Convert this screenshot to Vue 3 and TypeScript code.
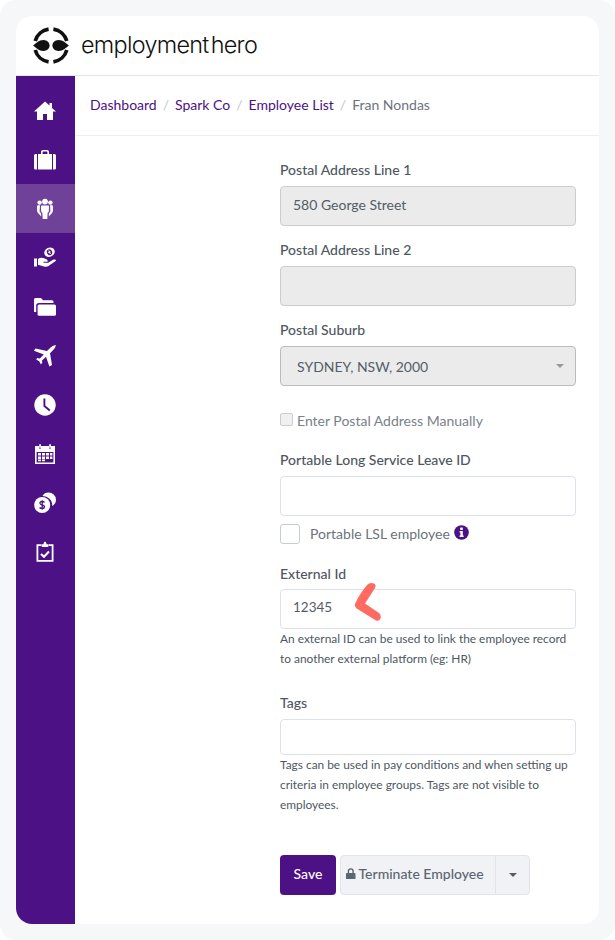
<script setup lang="ts">
const crumbs: string[] = ['Dashboard', 'Spark Co', 'Employee List']
const navItems = ['home', 'case', 'people', 'money', 'folder', 'plane', 'clock', 'cal', 'coins', 'clip']
</script>

<template>
  <div class="frame">
    <div class="card">
      <header class="top">
        <svg class="logo" width="36" height="37" viewBox="0 0 36 37">
          <g fill="none" stroke="#111" stroke-width="3.7">
            <path d="M15.6 2.2 A16.3 16.3 0 0 0 2.2 14" />
            <path d="M20.4 2.2 A16.3 16.3 0 0 1 33.8 14" />
            <path d="M15.6 34.8 A16.3 16.3 0 0 1 2.2 23" />
            <path d="M20.4 34.8 A16.3 16.3 0 0 0 33.8 23" />
          </g>
          <path d="M0 18.5 C3 16.5 5.5 13 10.5 13 C14.2 13 16.6 15.8 16.6 18.5 C16.6 21.2 14.2 24 10.5 24 C5.5 24 3 20.5 0 18.5 Z" fill="#111" />
          <path d="M36 18.5 C33 16.5 30.5 13 25.5 13 C21.8 13 19.4 15.8 19.4 18.5 C19.4 21.2 21.8 24 25.5 24 C30.5 24 33 20.5 36 18.5 Z" fill="#111" />
        </svg>
        <span class="brand">employment<span class="brand-gap">hero</span></span>
      </header>
      <div class="body">
        <nav class="side">
          <div v-for="n in navItems" :key="n" class="nav" :class="{ active: n === 'people' }">
            <svg width="22" height="22" viewBox="0 0 22 22" fill="#fff">
              <template v-if="n === 'home'">
                <path d="M11 1.5 L15.5 5.6 L15.5 3 L18 3 L18 8 L22 11.6 L19 11.6 L19 20 L13 20 L13 14 L9 14 L9 20 L3 20 L3 11.6 L0 11.6 Z" />
              </template>
              <template v-else-if="n === 'case'">
                <path fill-rule="evenodd" d="M7 5 L7 3 Q7 1 9 1 L13 1 Q15 1 15 3 L15 5 L18 5 L18 20.5 L4 20.5 L4 5 Z M8.6 5 L13.4 5 L13.4 3.3 Q13.4 2.6 12.7 2.6 L9.3 2.6 Q8.6 2.6 8.6 3.3 Z" />
                <path d="M0 6.5 Q0 5 1.5 5 L3 5 L3 20.5 L1.5 20.5 Q0 20.5 0 19 Z M19 5 L20.5 5 Q22 5 22 6.5 L22 19 Q22 20.5 20.5 20.5 L19 20.5 Z" />
              </template>
              <template v-else-if="n === 'people'">
                <circle cx="11" cy="3.6" r="2.9" />
                <circle cx="5.6" cy="4.6" r="2.2" />
                <circle cx="16.4" cy="4.6" r="2.2" />
                <path d="M7.6 7.6 L14.4 7.6 Q15 7.6 15 8.4 L14.8 13.8 L13.6 15 L13.3 21 L8.7 21 L8.4 15 L7.2 13.8 L7 8.4 Q7 7.6 7.6 7.6 Z" />
                <path d="M3 8.5 Q3 7.2 4.2 7.2 L6 7.2 L5.6 13.6 L7.1 15.4 L7.2 18.6 L4.4 15.6 Q3 14 3 12 Z" />
                <path d="M19 8.5 Q19 7.2 17.8 7.2 L16 7.2 L16.4 13.6 L14.9 15.4 L14.8 18.6 L17.6 15.6 Q19 14 19 12 Z" />
              </template>
              <template v-else-if="n === 'money'">
                <g transform="rotate(-25 15.5 5.2)">
                  <ellipse cx="15.5" cy="5.2" rx="5.4" ry="4.5" />
                  <ellipse cx="15.5" cy="5.2" rx="2.6" ry="3" fill="#4c1285" />
                  <path d="M15.5 3.2 L15.5 7.2 M14.3 5.2 L16.7 5.2" stroke="#fff" stroke-width="1" />
                </g>
                <path d="M0 11.5 L3 11.5 L3 19.5 L0 19.5 Z" />
                <path d="M4 12 Q7 10 10 11.3 L12.5 12.3 Q14.2 13 13.6 14.8 L9.5 14.8 L9.5 15.7 L14 15.7 L19.5 12.6 Q22 12 22 13.8 L14.5 19 Q12.4 20.2 10 19.4 L4 17.8 Z" />
              </template>
              <template v-else-if="n === 'folder'">
                <path d="M0 16 L0 3.5 Q0 2 1.5 2 L7 2 L9 4.2 L18 4.2 Q19.5 4.2 19.5 5.7 L19.5 7 L5 7 Q2.2 7 2.2 9.5 L2.2 16 Z" />
                <path d="M3.6 10 Q3.6 8.4 5.2 8.4 L20.4 8.4 Q22 8.4 22 10 L22 18.2 Q22 19.8 20.4 19.8 L5.2 19.8 Q3.6 19.8 3.6 18.2 Z" />
              </template>
              <template v-else-if="n === 'plane'">
                <path d="M22 0 Q21.5 2.6 19.2 5 L16 8.2 L18 20 L15.4 21.5 L12 11.8 L8 15.6 L8.3 18 L6.8 19.2 L5.2 16.2 L2.2 14.6 L3.2 13 L5.8 13.4 L9.8 9.4 L0 5.8 L1.4 3.6 L13 6 L16.6 2.6 Q19 0.4 22 0 Z" />
              </template>
              <template v-else-if="n === 'clock'">
                <circle cx="11" cy="11" r="10.7" />
                <path d="M10.4 4.5 L10.4 12 L15.8 16.4" stroke="#4c1285" stroke-width="1.9" fill="none" />
              </template>
              <template v-else-if="n === 'cal'">
                <path fill-rule="evenodd" d="M1 3 L5 3 L5 5.5 L7 5.5 L7 3 L15 3 L15 5.5 L17 5.5 L17 3 L21 3 L21 21 L1 21 Z M2.6 9 L2.6 19.4 L19.4 19.4 L19.4 9 Z" />
                <rect x="5.2" y="1" width="1.7" height="4" rx=".8" />
                <rect x="15.2" y="1" width="1.7" height="4" rx=".8" />
                <path d="M4 10 h3 v2.5 h-3z M8 10 h3 v2.5 h-3z M12 10 h3 v2.5 h-3z M16 10 h2.4 v2.5 h-2.4z M4 13.4 h3 v2.5 h-3z M8 13.4 h3 v2.5 h-3z M12 13.4 h3 v2.5 h-3z M16 13.4 h2.4 v2.5 h-2.4z M4 16.6 h3 v1.7 h-3z M8 16.6 h3 v1.7 h-3z" />
              </template>
              <template v-else-if="n === 'coins'">
                <path d="M14.5 0.5 A7.3 7.3 0 0 1 22 7.5 A7.5 7.5 0 0 1 18.2 14 A9.5 9.5 0 0 0 8.4 3.9 A7.3 7.3 0 0 1 14.5 0.5 Z" />
                <circle cx="8.2" cy="13" r="8" />
                <path d="M10.6 10.4 Q9.6 9.4 8.1 9.5 Q5.8 9.7 6 11.4 Q6.2 12.6 8.2 13 Q10.6 13.4 10.6 14.9 Q10.4 16.5 8.1 16.5 Q6.4 16.5 5.6 15.5 M8.2 8.2 L8.2 17.8" stroke="#4c1285" stroke-width="1.3" fill="none" />
              </template>
              <template v-else>
                <path fill-rule="evenodd" d="M2.5 3.3 L7.5 3.3 L7.5 5 L4.3 5 L4.3 19 L17.7 19 L17.7 5 L14.5 5 L14.5 3.3 L19.5 3.3 L19.5 20.8 L2.5 20.8 Z" />
                <path d="M7.7 6 L7.7 3.2 L9.4 3.2 Q9.8 0.6 11 0.6 Q12.2 0.6 12.6 3.2 L14.3 3.2 L14.3 6 Z" />
                <path d="M7 13 L10 15.8 L15 10.6" stroke="#fff" stroke-width="2.1" fill="none" />
              </template>
            </svg>
          </div>
        </nav>
        <main class="main">
          <div class="crumbs">
            <template v-for="c in crumbs" :key="c">
              <a class="crumb">{{ c }}</a><span class="sep">/</span>
            </template>
            <span class="current">Fran Nondas</span>
          </div>
          <form class="form" @submit.prevent>
            <label class="lbl">Postal Address Line 1</label>
            <div class="input disabled">580 George Street</div>

            <label class="lbl next">Postal Address Line 2</label>
            <div class="input disabled"></div>

            <label class="lbl next">Postal Suburb</label>
            <div class="input select">
              <span>SYDNEY, NSW, 2000</span>
              <i class="caret small"></i>
            </div>

            <div class="manual">
              <span class="mini-check"></span>
              <span>Enter Postal Address Manually</span>
            </div>

            <label class="lbl lsl">Portable Long Service Leave ID</label>
            <div class="input"></div>
            <div class="check-row">
              <span class="check"></span>
              <span class="check-text">Portable LSL employee</span>
              <svg class="info" width="15" height="15" viewBox="0 0 15 15">
                <circle cx="7.5" cy="7.5" r="7.3" fill="#4c1285" />
                <rect x="6.2" y="2.6" width="2.6" height="2.3" rx=".5" fill="#fff" />
                <path d="M5.6 6 L8.8 6 L8.8 10.6 L9.6 10.6 L9.6 12 L5.6 12 L5.6 10.6 L6.4 10.6 L6.4 7.4 L5.6 7.4 Z" fill="#fff" />
              </svg>
            </div>

            <label class="lbl ext">External Id</label>
            <div class="input ext-input">
              12345
              <svg class="arrow" width="32" height="41" viewBox="0 0 32 41">
                <path d="M17 2 Q20 0.5 23 1.5 Q25.5 3 24 6 L14 21.5 L28 31 Q30.5 33.5 29.5 36.5 Q28 39.5 25 38.5 L6.5 27 Q3 24.5 4.2 21.5 Q9 11 17 2 Z" fill="#ff6b61" />
              </svg>
            </div>
            <p class="help">An external ID can be used to link the employee record<br />to another external platform (eg: HR)</p>

            <label class="lbl tags">Tags</label>
            <div class="input tag-input"></div>
            <p class="help">Tags can be used in pay conditions and when setting up criteria in employee groups. Tags are not visible to employees.</p>

            <div class="actions">
              <button type="button" class="save">Save</button>
              <div class="group">
                <button type="button" class="term">
                  <svg width="9.5" height="11.5" viewBox="0 0 11 13" fill="#5b6670">
                    <path fill-rule="evenodd" d="M2 5.5 L2 3.6 A3.5 3.5 0 0 1 9 3.6 L9 5.5 L10 5.5 Q11 5.5 11 6.5 L11 12 Q11 13 10 13 L1 13 Q0 13 0 12 L0 6.5 Q0 5.5 1 5.5 Z M3.6 5.5 L7.4 5.5 L7.4 3.6 A1.9 1.9 0 0 0 3.6 3.6 Z" />
                  </svg>
                  Terminate Employee
                </button>
                <button type="button" class="drop"><i class="caret"></i></button>
              </div>
            </div>
          </form>
        </main>
      </div>
    </div>
  </div>
</template>

<style>
html, body { margin: 0; background: #fff; }
</style>

<style scoped>
.frame {
  width: 615px;
  height: 940px;
  box-sizing: border-box;
  padding: 16px;
  background: #f6f7f9;
  border-radius: 16px;
  font-family: "Lato", "Open Sans", sans-serif;
  color: #545d67;
  overflow: hidden;
}
.card {
  height: 908px;
  background: #fff;
  border-radius: 16px;
  overflow: hidden;
  display: flex;
  flex-direction: column;
}
.top {
  height: 59px;
  flex: none;
  border-bottom: 1px solid #e6e7ea;
  display: flex;
  align-items: center;
  padding-left: 17px;
  gap: 12px;
}
.logo { flex: none; }
.brand {
  font-family: "Inter", sans-serif;
  font-size: 23.4px;
  letter-spacing: -0.7px;
  color: #111;
  font-weight: 300;
  padding-bottom: 2px;
}
.brand-gap { margin-left: 2px; }
.body { flex: 1; display: flex; min-height: 0; }
.side {
  width: 59px;
  flex: none;
  background: #4c1285;
  padding-top: 10px;
  box-sizing: border-box;
}
.nav {
  height: 49px;
  display: flex;
  align-items: center;
  justify-content: center;
  padding-right: 1px;
}
.nav.active { background: #704199; }
.main { flex: 1; min-width: 0; }
.crumbs {
  height: 57px;
  border-bottom: 1px solid #eceef0;
  display: flex;
  align-items: center;
  padding: 0 0 2px 15px;
  box-sizing: content-box;
  font-size: 14px;
}
.crumb { color: #4c1285; }
.sep { color: #c4c7cc; margin: 0 6px 0 6px; }
.current { color: #6d747c; }
.form {
  width: 296px;
  margin-left: 205px;
  padding-top: 25px;
}
.lbl {
  display: block;
  font-size: 14px;
  line-height: 17px;
  font-weight: 500;
  color: #4e5761;
  margin-bottom: 8px;
}
.lbl.next { margin-top: 15px; }
.lbl.lsl { margin-top: 22px; }
.lbl.ext { margin-top: 21px; margin-bottom: 7px; }
.lbl.tags { margin-top: 25px; }
.input {
  height: 40px;
  box-sizing: border-box;
  border: 1px solid #dde2e8;
  border-radius: 4px;
  background: #fff;
  display: flex;
  align-items: center;
  padding: 0 0 4px 12px;
  font-size: 14px;
  color: #545d67;
  position: relative;
}
.input.disabled { background: #ebebeb; border-color: #ccc; }
.input.select {
  background: #ebebeb;
  border-color: #bbb;
  padding: 0 11px 0 16px;
  justify-content: space-between;
}
.tag-input { height: 36px; }
.caret {
  display: block;
  width: 0;
  height: 0;
  border-left: 4.5px solid transparent;
  border-right: 4.5px solid transparent;
  border-top: 4.5px solid #545d67;
}
.caret.small { border-top-color: #999; border-left-width: 4px; border-right-width: 4px; border-top-width: 4px; }
.manual {
  display: flex;
  align-items: center;
  gap: 4px;
  margin-top: 25px;
  height: 18px;
  font-size: 14px;
  color: #7b8188;
}
.mini-check {
  width: 13px;
  height: 13px;
  box-sizing: border-box;
  border: 1px solid #ccc;
  border-radius: 2px;
  background: #f0f0f0;
  margin-bottom: 2px;
}
.check-row {
  display: flex;
  align-items: center;
  margin-top: 8px;
  height: 20px;
  font-size: 14px;
  color: #6b737b;
}
.check {
  width: 20px;
  height: 20px;
  flex: none;
  box-sizing: border-box;
  border: 1px solid #c5ccd4;
  border-radius: 3px;
  background: #fff;
}
.check-text { margin-left: 10px; margin-right: 4px; padding-bottom: 1px; }
.info { flex: none; margin-top: -3px; }
.ext-input { font-size: 13.5px; }
.arrow { position: absolute; left: 70px; top: -8px; }
.help {
  margin: 0;
  font-size: 11.9px;
  line-height: 20px;
  color: #4e5761;
}
.actions {
  display: flex;
  gap: 4px;
  margin-top: 40px;
  height: 40px;
}
.save {
  width: 56px;
  border: 0;
  border-radius: 4px;
  background: #4c1285;
  color: #fff;
  font: 500 14px "Lato", sans-serif;
  padding: 0 0 3px;
}
.group {
  display: flex;
  border: 1px solid #e1e4ea;
  border-radius: 4px;
  background: #f0f2f6;
  box-sizing: border-box;
  width: 190px;
}
.term {
  flex: 1;
  border: 0;
  background: none;
  border-right: 1px solid #e1e4ea;
  display: flex;
  align-items: center;
  gap: 3px;
  padding: 0 0 3px 5px;
  font: 500 14px "Lato", sans-serif;
  color: #5b6670;
  white-space: nowrap;
}
.drop {
  width: 33px;
  flex: none;
  border: 0;
  background: none;
  display: flex;
  align-items: center;
  justify-content: center;
  padding: 0;
}
</style>
